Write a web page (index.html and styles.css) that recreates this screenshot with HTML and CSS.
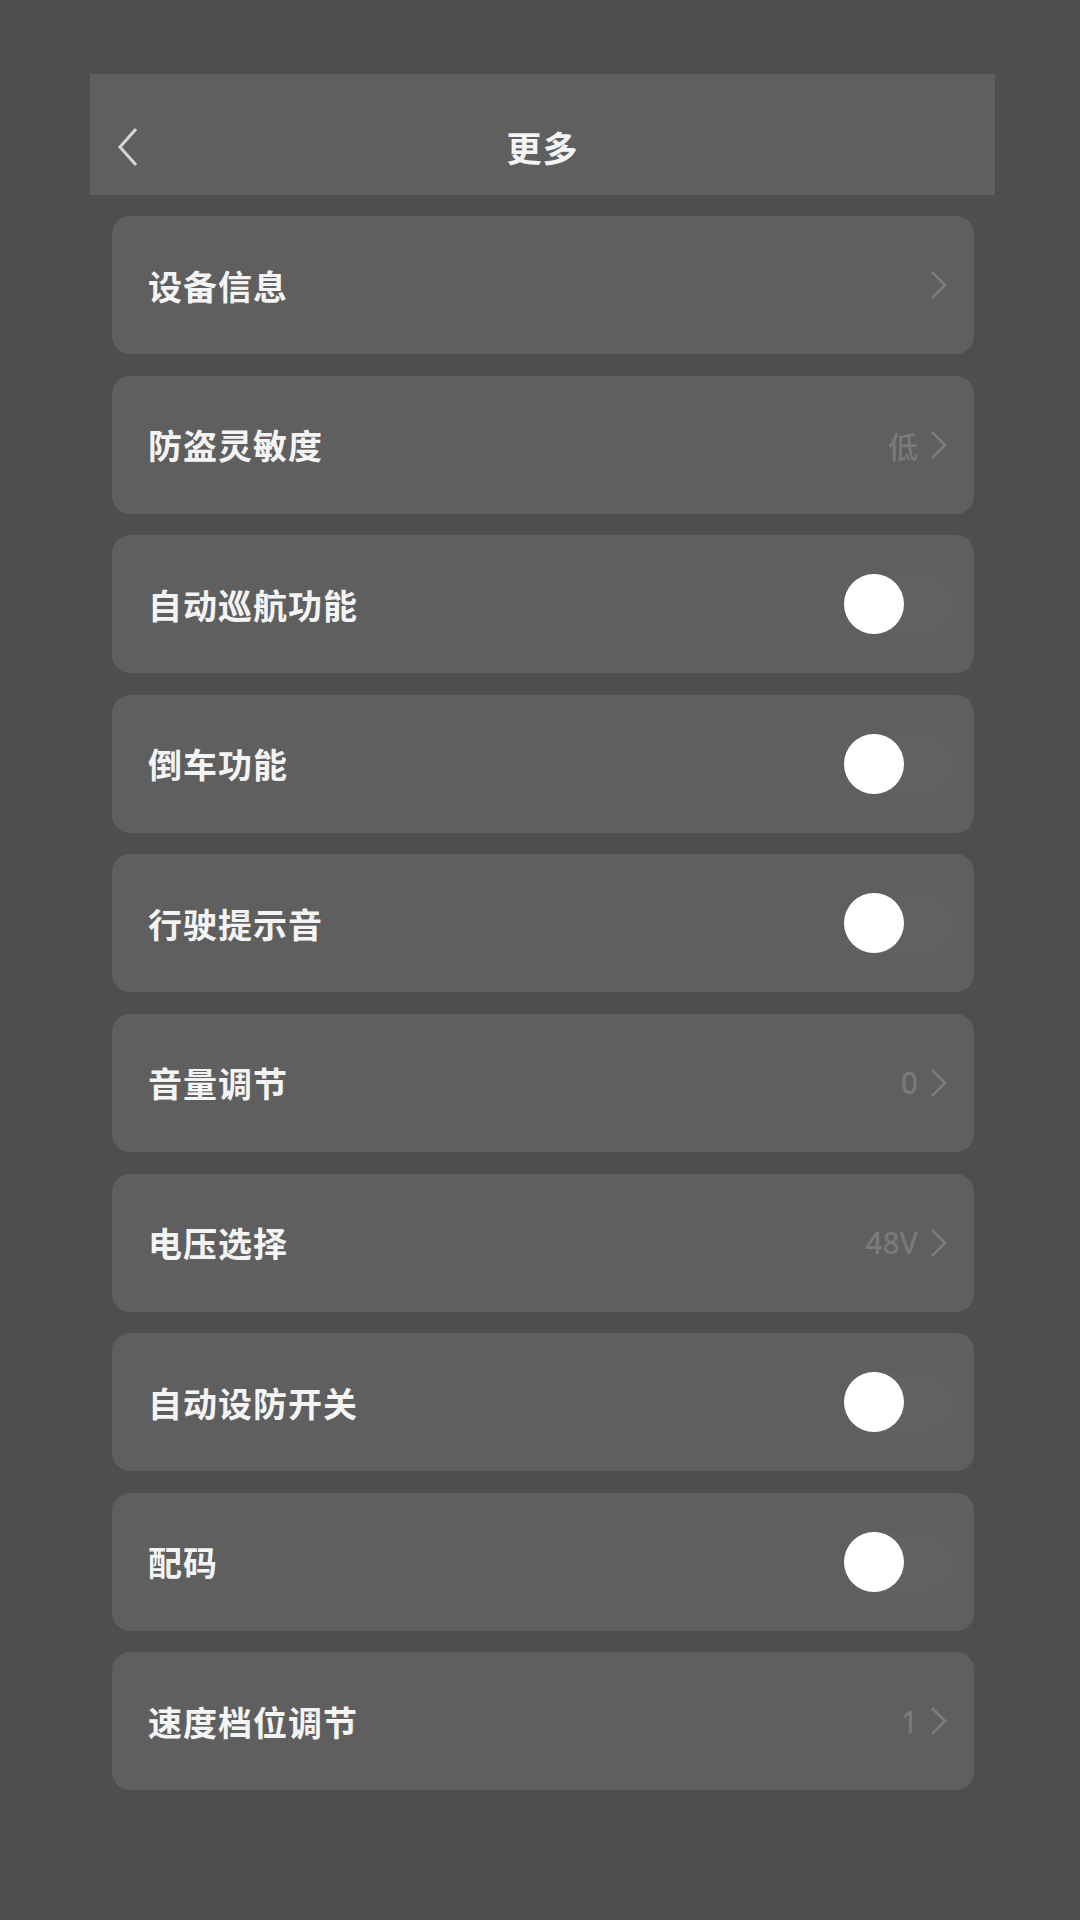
FILE: index.html
```html
<!DOCTYPE html>
<html lang="zh-CN">
<head>
    <meta charset="UTF-8">
    <meta name="viewport" content="width=device-width, initial-scale=1.0">
    <title>更多</title>
    <link rel="stylesheet" href="styles.css">
</head>
<body>
    <div class="page">
        <div class="header">
            <span class="back">
                <svg width="24" height="40" viewBox="0 0 24 40"><polyline points="20,2 4,20 20,38" fill="none" stroke="#d6d6d6" stroke-width="3"/></svg>
            </span>
            <h1>更多</h1>
        </div>

        <div class="list">
            <div class="item">
                <span class="label">设备信息</span>
                <span class="right"><span class="arrow"><svg width="18" height="30" viewBox="0 0 18 30"><polyline points="2,2 15,15 2,28" fill="none" stroke="#7c7c7c" stroke-width="2.6"/></svg></span></span>
            </div>
            <div class="item">
                <span class="label">防盗灵敏度</span>
                <span class="right"><span class="value cjk">低</span><span class="arrow"><svg width="18" height="30" viewBox="0 0 18 30"><polyline points="2,2 15,15 2,28" fill="none" stroke="#7c7c7c" stroke-width="2.6"/></svg></span></span>
            </div>
            <div class="item">
                <span class="label">自动巡航功能</span>
                <span class="switch"><span class="knob"></span></span>
            </div>
            <div class="item">
                <span class="label">倒车功能</span>
                <span class="switch"><span class="knob"></span></span>
            </div>
            <div class="item">
                <span class="label">行驶提示音</span>
                <span class="switch"><span class="knob"></span></span>
            </div>
            <div class="item">
                <span class="label">音量调节</span>
                <span class="right"><span class="value">0</span><span class="arrow"><svg width="18" height="30" viewBox="0 0 18 30"><polyline points="2,2 15,15 2,28" fill="none" stroke="#7c7c7c" stroke-width="2.6"/></svg></span></span>
            </div>
            <div class="item">
                <span class="label">电压选择</span>
                <span class="right"><span class="value">48V</span><span class="arrow"><svg width="18" height="30" viewBox="0 0 18 30"><polyline points="2,2 15,15 2,28" fill="none" stroke="#7c7c7c" stroke-width="2.6"/></svg></span></span>
            </div>
            <div class="item">
                <span class="label">自动设防开关</span>
                <span class="switch"><span class="knob"></span></span>
            </div>
            <div class="item">
                <span class="label">配码</span>
                <span class="switch"><span class="knob"></span></span>
            </div>
            <div class="item">
                <span class="label">速度档位调节</span>
                <span class="right"><span class="value">1</span><span class="arrow"><svg width="18" height="30" viewBox="0 0 18 30"><polyline points="2,2 15,15 2,28" fill="none" stroke="#7c7c7c" stroke-width="2.6"/></svg></span></span>
            </div>
        </div>
    </div>
</body>
</html>
```

FILE: styles.css
```css
/* page */
body {
    margin: 0;
    padding: 0;
    background-color: #4e4e4e;
    font-family: "Noto Sans CJK SC", "Noto Sans", sans-serif;
    color: #f4f4f4;
}
.page {
    width: 905px;
    margin-left: 90px;
    padding-top: 74px;
}

/* top bar */
.header {
    height: 121px;
    box-sizing: border-box;
    padding-top: 24px;
    background-color: #5f5f5f;
    display: flex;
    align-items: center;
    justify-content: center;
    position: relative;
}
.header h1 {
    margin: 0;
    font-size: 35px;
    font-weight: 700;
    letter-spacing: 1px;
}
.back {
    position: absolute;
    left: 26px;
    top: 53px;
    line-height: 0;
}

/* rows */
.list {
    display: flex;
    flex-direction: column;
    gap: 21.6px;
    margin: 21px 21px 0 22px;
}
.item {
    height: 138px;
    background-color: #5f5f5f;
    border-radius: 18px;
    display: flex;
    align-items: center;
    justify-content: space-between;
    padding: 0 26px 0 36px;
}
.label {
    font-size: 34px;
    font-weight: 700;
    letter-spacing: 1px;
}
.right {
    display: flex;
    align-items: center;
    gap: 12px;
}
.value {
    font-size: 30px;
    font-weight: 500;
    color: #7a7a7a;
    font-family: "Noto Sans", "Noto Sans CJK SC", sans-serif;
}
.value.cjk {
    font-family: "Noto Sans CJK SC", sans-serif;
}
.arrow {
    line-height: 0;
}

/* switches (all off) */
.switch {
    width: 110px;
    height: 60px;
    border-radius: 30px;
    background-color: #616161;
    position: relative;
    margin-right: -6px;
}
.knob {
    position: absolute;
    left: 0;
    top: 0;
    width: 60px;
    height: 60px;
    border-radius: 50%;
    background-color: #fff;
}
```
